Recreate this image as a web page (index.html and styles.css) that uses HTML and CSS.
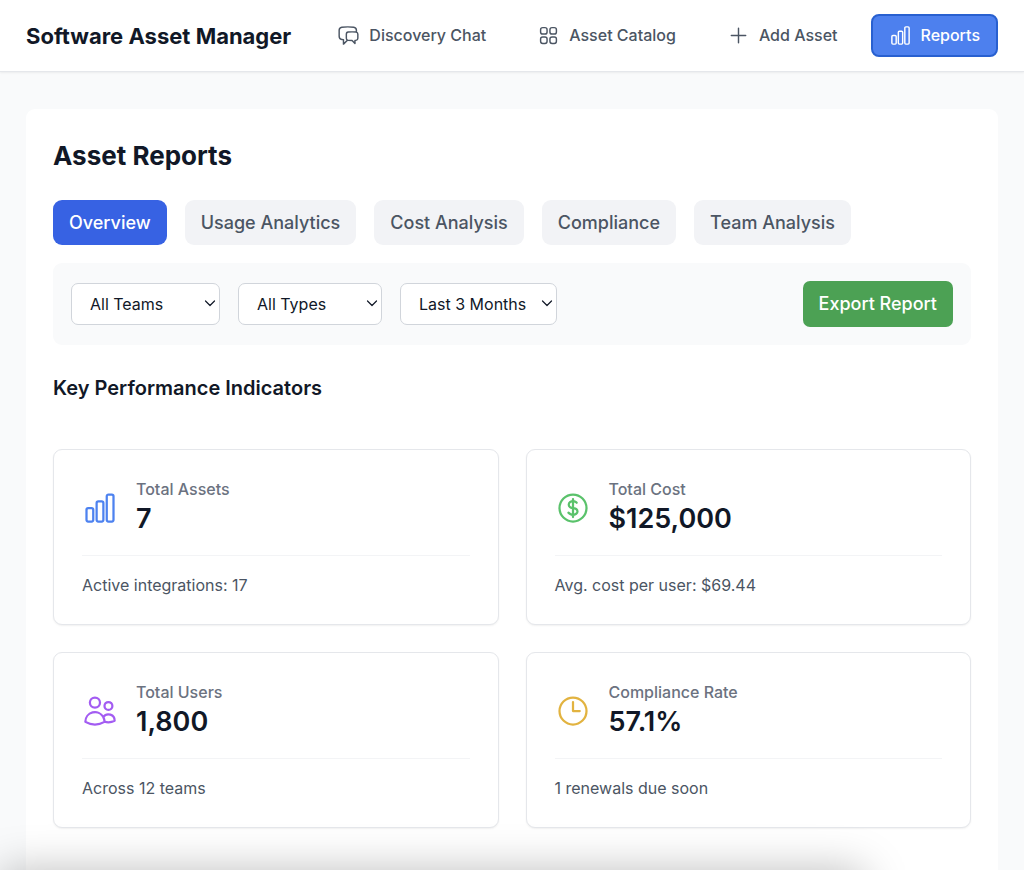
FILE: index.html
```html
<!DOCTYPE html>
<html lang="en">
<head>
    <meta charset="UTF-8">
    <meta name="viewport" content="width=device-width, initial-scale=1.0">
    <title>Software Asset Manager</title>
    <link rel="stylesheet" href="styles.css">
</head>
<body>

    <!-- Shared icon shapes -->
    <svg class="sprite" aria-hidden="true">
        <symbol id="chart-bar" viewBox="0 0 24 24">
            <path d="M3 13.125C3 12.504 3.504 12 4.125 12h2.25c.621 0 1.125.504 1.125 1.125v6.75C7.5 20.496 6.996 21 6.375 21h-2.25A1.125 1.125 0 0 1 3 19.875v-6.75ZM9.75 8.625c0-.621.504-1.125 1.125-1.125h2.25c.621 0 1.125.504 1.125 1.125v11.25c0 .621-.504 1.125-1.125 1.125h-2.25a1.125 1.125 0 0 1-1.125-1.125V8.625ZM16.5 4.125c0-.621.504-1.125 1.125-1.125h2.25C20.496 3 21 3.504 21 4.125v15.75c0 .621-.504 1.125-1.125 1.125h-2.25a1.125 1.125 0 0 1-1.125-1.125V4.125Z"/>
        </symbol>
        <symbol id="chevron" viewBox="0 0 12 12">
            <path d="M1.5 4 6 8.5 10.5 4"/>
        </symbol>
    </svg>

    <header class="header">
        <h1 class="brand">Software Asset Manager</h1>
        <nav class="nav">
            <button class="nav-item">
                <svg class="icon" viewBox="0 0 24 24" aria-hidden="true"><path d="M20.25 8.511c.884.284 1.5 1.128 1.5 2.097v4.286c0 1.136-.847 2.1-1.98 2.193-.34.027-.68.052-1.02.072v3.091l-3-3c-1.354 0-2.694-.055-4.02-.163a2.115 2.115 0 0 1-.825-.242m9.345-8.334a2.126 2.126 0 0 0-.476-.095 48.64 48.64 0 0 0-8.048 0c-1.131.094-1.976 1.057-1.976 2.192v4.286c0 .837.46 1.58 1.155 1.951m9.345-8.334V6.637c0-1.621-1.152-3.026-2.76-3.235A48.455 48.455 0 0 0 11.25 3c-2.115 0-4.198.137-6.24.402-1.608.209-2.76 1.614-2.76 3.235v6.226c0 1.621 1.152 3.026 2.76 3.235.577.075 1.157.14 1.74.194V21l4.155-4.155"/></svg>
                Discovery Chat
            </button>
            <button class="nav-item">
                <svg class="icon" viewBox="0 0 24 24" aria-hidden="true"><path d="M3.75 6A2.25 2.25 0 0 1 6 3.75h2.25A2.25 2.25 0 0 1 10.5 6v2.25a2.25 2.25 0 0 1-2.25 2.25H6a2.25 2.25 0 0 1-2.25-2.25V6ZM3.75 15.75A2.25 2.25 0 0 1 6 13.5h2.25a2.25 2.25 0 0 1 2.25 2.25V18a2.25 2.25 0 0 1-2.25 2.25H6A2.25 2.25 0 0 1 3.75 18v-2.25ZM13.5 6a2.25 2.25 0 0 1 2.25-2.25H18A2.25 2.25 0 0 1 20.25 6v2.25A2.25 2.25 0 0 1 18 10.5h-2.25a2.25 2.25 0 0 1-2.25-2.25V6ZM13.5 15.75a2.25 2.25 0 0 1 2.25-2.25H18a2.25 2.25 0 0 1 2.25 2.25V18A2.25 2.25 0 0 1 18 20.25h-2.25A2.25 2.25 0 0 1 13.5 18v-2.25Z"/></svg>
                Asset Catalog
            </button>
            <button class="nav-item">
                <svg class="icon" viewBox="0 0 24 24" aria-hidden="true"><path d="M12 4.5v15m7.5-7.5h-15"/></svg>
                Add Asset
            </button>
            <button class="nav-item active">
                <svg class="icon" aria-hidden="true"><use href="#chart-bar"/></svg>
                Reports
            </button>
        </nav>
    </header>

    <main class="main">
        <section class="reports">
            <h2 class="page-title">Asset Reports</h2>

            <div class="tabs">
                <button class="tab active">Overview</button>
                <button class="tab">Usage Analytics</button>
                <button class="tab">Cost Analysis</button>
                <button class="tab">Compliance</button>
                <button class="tab">Team Analysis</button>
            </div>

            <div class="filters">
                <div class="select-wrap">
                    <select class="select select-team" aria-label="Team">
                        <option>All Teams</option>
                    </select>
                    <svg class="chevron" aria-hidden="true"><use href="#chevron"/></svg>
                </div>
                <div class="select-wrap">
                    <select class="select select-type" aria-label="Type">
                        <option>All Types</option>
                    </select>
                    <svg class="chevron" aria-hidden="true"><use href="#chevron"/></svg>
                </div>
                <div class="select-wrap">
                    <select class="select select-period" aria-label="Period">
                        <option>Last 3 Months</option>
                    </select>
                    <svg class="chevron" aria-hidden="true"><use href="#chevron"/></svg>
                </div>
                <button class="export">Export Report</button>
            </div>

            <h3 class="section-title">Key Performance Indicators</h3>

            <div class="kpi-grid">
                <div class="kpi">
                    <div class="kpi-top">
                        <svg class="kpi-icon blue" aria-hidden="true"><use href="#chart-bar"/></svg>
                        <div>
                            <p class="kpi-label">Total Assets</p>
                            <p class="kpi-value">7</p>
                        </div>
                    </div>
                    <p class="kpi-note">Active integrations: 17</p>
                </div>
                <div class="kpi">
                    <div class="kpi-top">
                        <svg class="kpi-icon green" viewBox="0 0 24 24" aria-hidden="true"><path d="M12 6v12m-3-2.818.879.659c1.171.879 3.07.879 4.242 0 1.172-.879 1.172-2.303 0-3.182C13.536 12.219 12.768 12 12 12c-.725 0-1.45-.22-2.003-.659-1.106-.879-1.106-2.303 0-3.182s2.9-.879 4.006 0l.415.33M21 12a9 9 0 1 1-18 0 9 9 0 0 1 18 0Z"/></svg>
                        <div>
                            <p class="kpi-label">Total Cost</p>
                            <p class="kpi-value">$125,000</p>
                        </div>
                    </div>
                    <p class="kpi-note">Avg. cost per user: $69.44</p>
                </div>
                <div class="kpi">
                    <div class="kpi-top">
                        <svg class="kpi-icon purple" viewBox="0 0 24 24" aria-hidden="true"><path d="M15 19.128a9.38 9.38 0 0 0 2.625.372 9.337 9.337 0 0 0 4.121-.952 4.125 4.125 0 0 0-7.533-2.493M15 19.128v-.003c0-1.113-.285-2.16-.786-3.07M15 19.128v.106A12.318 12.318 0 0 1 8.624 21c-2.331 0-4.512-.645-6.374-1.766l-.001-.109a6.375 6.375 0 0 1 11.964-3.07M12 6.375a3.375 3.375 0 1 1-6.75 0 3.375 3.375 0 0 1 6.75 0Zm8.25 2.25a2.625 2.625 0 1 1-5.25 0 2.625 2.625 0 0 1 5.25 0Z"/></svg>
                        <div>
                            <p class="kpi-label">Total Users</p>
                            <p class="kpi-value">1,800</p>
                        </div>
                    </div>
                    <p class="kpi-note">Across 12 teams</p>
                </div>
                <div class="kpi">
                    <div class="kpi-top">
                        <svg class="kpi-icon yellow" viewBox="0 0 24 24" aria-hidden="true"><path d="M12 6v6h4.5M21 12a9 9 0 1 1-18 0 9 9 0 0 1 18 0Z"/></svg>
                        <div>
                            <p class="kpi-label">Compliance Rate</p>
                            <p class="kpi-value">57.1%</p>
                        </div>
                    </div>
                    <p class="kpi-note">1 renewals due soon</p>
                </div>
            </div>
        </section>
    </main>

    <div class="bottom-shade"></div>

</body>
</html>
```
FILE: styles.css
```css
* {
    box-sizing: border-box;
    margin: 0;
}
body {
    display: flex;
    flex-direction: column;
    min-height: 100vh;
    font-family: Inter, 'Liberation Sans', sans-serif;
    font-size: 16px;
    line-height: 23px;
    color: #111827;
    background-color: #f9fafb;
}
button, select {
    font: inherit;
    cursor: pointer;
}
svg {
    fill: none;
    stroke: currentColor;
    stroke-width: 1.5;
    stroke-linecap: round;
    stroke-linejoin: round;
}
.sprite {
    display: none;
}

/* Header */
.header {
    display: flex;
    align-items: center;
    justify-content: space-between;
    padding: 14px 26px;
    background-color: #fff;
    border-bottom: 1px solid #e5e7eb;
    box-shadow: 0 1px 2px rgba(0, 0, 0, 0.06);
}
.brand {
    font-size: 22px;
    font-weight: 700;
    line-height: 32px;
    white-space: nowrap;
}
.nav {
    display: flex;
    gap: 15px;
}
.nav-item {
    display: flex;
    align-items: center;
    gap: 9px;
    padding: 8px 16px;
    color: #4b5563;
    font-weight: 500;
    white-space: nowrap;
    background: none;
    border: 2px solid transparent;
    border-radius: 8px;
}
.nav-item.active {
    color: #fff;
    background-color: #4d80ee;
    border-color: #2860d0;
}
.icon {
    width: 23px;
    height: 23px;
}

/* Report panel */
.main {
    display: flex;
    flex: 1;
    padding: 37px 26px 0;
}
.reports {
    flex: 1;
    padding: 27px;
    background-color: #fff;
    border-radius: 9px 9px 0 0;
}
.page-title {
    margin-bottom: 24px;
    font-size: 26px;
    font-weight: 700;
    line-height: 40px;
}
.tabs {
    display: flex;
    gap: 18px;
    margin-bottom: 18px;
}
.tab {
    padding: 9px 16px;
    font-size: 18px;
    font-weight: 500;
    line-height: 27px;
    color: #4b5563;
    background-color: #f2f3f6;
    border: none;
    border-radius: 9px;
}
.tab.active {
    color: #fff;
    background-color: #3762e3;
}
.filters {
    display: flex;
    align-items: center;
    gap: 18px;
    margin-bottom: 27px;
    padding: 18px;
    background-color: #f9fafb;
    border-radius: 9px;
}
.select-wrap {
    position: relative;
}
.select {
    display: block;
    height: 42px;
    padding: 0 18px;
    color: #111827;
    background-color: #fff;
    border: 1px solid #d1d5db;
    border-radius: 7px;
    appearance: none;
}
.select-team {
    width: 149px;
}
.select-type {
    width: 144px;
}
.select-period {
    width: 157px;
}
.chevron {
    position: absolute;
    top: 14px;
    right: 4px;
    width: 12px;
    height: 12px;
    stroke-width: 1.2;
    pointer-events: none;
}
.export {
    margin-left: auto;
    padding: 9px 16px;
    font-size: 18px;
    font-weight: 500;
    line-height: 28px;
    color: #fff;
    background-color: #4ca154;
    border: none;
    border-radius: 7px;
}
.section-title {
    margin-bottom: 45px;
    font-size: 20px;
    font-weight: 600;
    line-height: 32px;
}

/* KPI cards */
.kpi-grid {
    display: grid;
    grid-template-columns: 1fr 1fr;
    gap: 27px;
}
.kpi {
    padding: 28px 28px 27px;
    background-color: #fff;
    border: 1px solid #e5e7eb;
    border-radius: 9px;
    box-shadow: 0 1px 2px rgba(0, 0, 0, 0.06);
}
.kpi-top {
    display: flex;
    align-items: center;
    gap: 18px;
    margin-bottom: 18px;
}
.kpi-icon {
    width: 36px;
    height: 36px;
}
.blue {
    color: #4d82f0;
}
.green {
    color: #5ac26b;
}
.purple {
    color: #a35cf2;
}
.yellow {
    color: #e2b340;
}
.kpi-label {
    font-weight: 500;
    color: #6b7280;
}
.kpi-value {
    font-size: 27px;
    font-weight: 600;
    line-height: 36px;
}
.kpi-note {
    padding-top: 18px;
    color: #4b5563;
    border-top: 1px solid #f3f4f6;
}

/* Soft shade rising from below the window edge */
.bottom-shade {
    position: fixed;
    left: 0;
    right: 160px;
    top: 100%;
    height: 60px;
    box-shadow: 0 0 44px rgba(0, 0, 0, 0.26);
    pointer-events: none;
}
```
